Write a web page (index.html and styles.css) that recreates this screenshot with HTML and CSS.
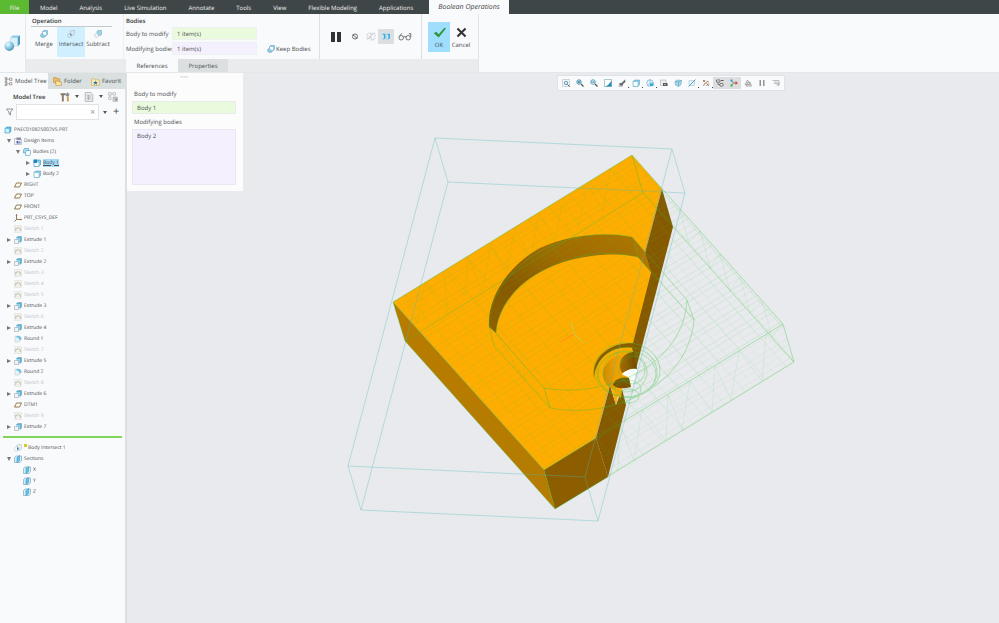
FILE: index.html
```html
<!DOCTYPE html>
<html lang="en">
<head>
    <meta charset="UTF-8">
    <meta name="viewport" content="width=device-width, initial-scale=1.0">
    <title>Boolean Operations</title>
    <link rel="stylesheet" href="styles.css">
</head>
<body>
    <!-- shared icons -->
    <svg class="sprite" aria-hidden="true">
        <defs>
            <radialGradient id="ball" cx=".35" cy=".3" r=".8">
                <stop offset="0" stop-color="#eefaff"/>
                <stop offset=".5" stop-color="#8cc9e3"/>
                <stop offset="1" stop-color="#3e87a8"/>
            </radialGradient>
        </defs>
        <symbol id="i-boolean" viewBox="0 0 16 16">
            <path d="M6 3l2-2h7v8l-2 2H6z" fill="#8ccbe5"/>
            <path d="M6 3h7v8H6z" fill="#d9f0fa"/>
            <path d="M13 3l2-2v8l-2 2z" fill="#4d9bbd"/>
            <circle cx="5" cy="11" r="4.5" fill="url(#ball)"/>
        </symbol>
        <symbol id="i-merge" viewBox="0 0 16 16">
            <path d="M5 3l2-2h8v8l-2 2h-2c0 3-2 4-5 4-3 0-5-2-5-4 0-3 2-4 4-4z" fill="#8fcbe3" stroke="#5f9cb5"/>
            <path d="M6 4h6v6H9L6 7z" fill="#f5fcff"/>
        </symbol>
        <symbol id="i-intersect" viewBox="0 0 16 16">
            <path d="M6 3l2-2h7v8l-2 2H6z" fill="#d8e3e9" stroke="#9fb5bf"/>
            <circle cx="5" cy="11" r="4" fill="#dce6eb" stroke="#a1b5be"/>
            <path d="M6 7c3 0 4 2 3 4H6z" fill="#3d9bcb"/>
        </symbol>
        <symbol id="i-subtract" viewBox="0 0 16 16">
            <path d="M6 3l2-2h7v8l-2 2H9c0-2-1-4-3-4z" fill="#9ed5ec" stroke="#5f9cb5"/>
            <circle cx="5" cy="11" r="4" fill="#eef2f5" stroke="#b4c1c8"/>
        </symbol>
        <symbol id="i-part" viewBox="0 0 16 16">
            <path d="M2 5l3-3h9v8l-3 4H2z" fill="#63c3ea" stroke="#2d84aa"/>
            <path d="M3 6h7v7H3z" fill="#d4f2fd"/>
        </symbol>
        <symbol id="i-design" viewBox="0 0 16 16">
            <path d="M1 3h5l1 2h8v10H1z" fill="#f4f1fa" stroke="#9b93ad"/>
            <path d="M5 1h9v5H5z" fill="#8f89a5"/>
            <path d="M5 13V8h4v5z" fill="#6f5b9c"/>
            <circle cx="11" cy="11" r="2.5" fill="#69a8d0"/>
        </symbol>
        <symbol id="i-bodies" viewBox="0 0 16 16">
            <path d="M1 4l2-3h8v9H1z" fill="#a7dff5" stroke="#3284a8"/>
            <path d="M5 8l2-3h8v7l-2 3H5z" fill="#f3fcff" stroke="#3284a8"/>
        </symbol>
        <symbol id="i-body" viewBox="0 0 16 16">
            <path d="M2 5l3-3h10v9l-3 4H2z" fill="#8bcbe4" stroke="#4f98b8"/>
            <path d="M3 6h8v8H3z" fill="#fff"/>
        </symbol>
        <symbol id="i-body-on" viewBox="0 0 16 16">
            <path d="M2 5l3-3h10v9l-3 4H2z" fill="#8bcbe4" stroke="#3284a8"/>
            <path d="M3 7h8v7H3z" fill="#fff"/>
            <path d="M1 1h7v7H1z" fill="#1e86ba"/>
        </symbol>
        <symbol id="i-plane" viewBox="0 0 16 16">
            <path d="M5 4h10l-4 8H1z" fill="#fffdf5" stroke="#8c6b3e" stroke-width="1.8"/>
        </symbol>
        <symbol id="i-csys" viewBox="0 0 16 16">
            <path d="M5 1v10h10M5 11l-4 4" fill="none" stroke="#8c6b3e" stroke-width="1.8"/>
            <path d="M3 3l2-3 2 3zM13 9l3 2-3 2z" fill="#8c6b3e"/>
        </symbol>
        <symbol id="i-sketch" viewBox="0 0 16 16">
            <path d="M1 1h14v14H1z" fill="#f1f1ec" stroke="#dddcd4"/>
            <path d="M3 12c0-9 10-9 10 0M2 7h4M10 6l4 3" fill="none" stroke="#bab7a4" stroke-width="1.5"/>
        </symbol>
        <symbol id="i-extrude" viewBox="0 0 16 16">
            <path d="M5 3l3-2h7v9l-3 3z" fill="#52b5df" stroke="#72909c"/>
            <path d="M5 4h7v7H5z" fill="#94d7f1"/>
            <path d="M1 7h8v8H1z" fill="#eef3f6" stroke="#8b9ba3"/>
        </symbol>
        <symbol id="i-round" viewBox="0 0 16 16">
            <path d="M2 2h6c4 0 6 2 6 6l-4 6H2z" fill="#e7f0f4" stroke="#b9c8cf"/>
            <path d="M5 2h4c4 0 6 3 6 7l-4 2c0-4-2-6-6-6z" fill="#6cc2e7"/>
        </symbol>
        <symbol id="i-isect" viewBox="0 0 16 16">
            <path d="M5 3l3-2h7v9l-3 3H5z" fill="#e3e9ec" stroke="#b7c2c8"/>
            <circle cx="5" cy="10" r="4.5" fill="#fafcfd" stroke="#b7c2c8"/>
            <path d="M6 6l4 3-4 4z" fill="#3986ab"/>
        </symbol>
        <symbol id="i-section" viewBox="0 0 16 16">
            <path d="M1 5l3-3h11v9l-3 4H1z" fill="#d6edf7" stroke="#5b8fa6"/>
            <path d="M6 5l5-4v10l-5 4z" fill="#5fc6f1" stroke="#2f87ae"/>
        </symbol>
    </svg>

    <nav class="menu-bar">
        <button class="menu file">File</button>
        <button class="menu">Model</button>
        <button class="menu">Analysis</button>
        <button class="menu">Live Simulation</button>
        <button class="menu">Annotate</button>
        <button class="menu">Tools</button>
        <button class="menu">View</button>
        <button class="menu">Flexible Modeling</button>
        <button class="menu">Applications</button>
        <button class="menu current">Boolean Operations</button>
    </nav>

    <header class="ribbon">
        <div class="ribbon-side"><svg class="big-icon"><use href="#i-boolean"/></svg></div>
        <div class="ribbon-main">
            <div class="groups">
                <section class="group operation">
                    <h2>Operation</h2>
                    <div class="op-buttons">
                        <button class="op"><svg><use href="#i-merge"/></svg>Merge</button>
                        <button class="op active"><svg><use href="#i-intersect"/></svg>Intersect</button>
                        <button class="op"><svg><use href="#i-subtract"/></svg>Subtract</button>
                    </div>
                </section>
                <section class="group bodies">
                    <h2>Bodies</h2>
                    <div class="body-fields">
                        <label for="modify">Body to modify</label>
                        <input class="pick green" id="modify" value="1 item(s)" readonly>
                        <span></span>
                        <label for="modifying">Modifying bodies</label>
                        <input class="pick purple" id="modifying" value="1 item(s)" readonly>
                        <button class="keep"><svg><use href="#i-merge"/></svg>Keep Bodies</button>
                    </div>
                </section>
                <section class="group preview">
                    <button class="tool pause" aria-label="Pause"><svg viewBox="0 0 12 12"><path d="M1 1h4v10H1zM7 1h4v10H7z" fill="#333"/></svg></button>
                    <button class="tool" aria-label="No preview"><svg viewBox="0 0 16 16"><circle cx="8" cy="8" r="4.5" fill="none" stroke="#555" stroke-width="1.5"/><path d="M4 5l8 6" stroke="#555" stroke-width="1.5"/></svg></button>
                    <button class="tool" aria-label="Unattached preview"><svg viewBox="0 0 16 16"><path d="M1 4l2-2h5v9H1zM8 5l2-3h5v9l-2 3H6M1 14l13-12M2 5l11 9" fill="none" stroke="#a5a9ab" stroke-dasharray="2 1"/></svg></button>
                    <button class="tool on" aria-label="Attached preview"><svg viewBox="0 0 16 16"><path d="M1 5l2-2h4v8l-2 2H1zM9 5l2-2h4v8l-2 2H9z" fill="#39aede"/><path d="M1 5h3v7H1zM9 5h3v7H9z" fill="#d7f0fa"/></svg></button>
                    <button class="tool glasses" aria-label="Verify"><svg viewBox="0 0 22 14"><g fill="none" stroke="#6b6f71" stroke-width="1.5"><circle cx="5" cy="9" r="3.5"/><circle cx="16" cy="9" r="3.5"/><path d="M8 8q3-2 5 0M2 7l4-5M20 8V2l-3 1"/></g></svg></button>
                </section>
                <section class="group finish">
                    <button class="done ok"><svg viewBox="0 0 16 16"><path d="M1 9l3-2 3 3 7-8 2 1-9 11z" fill="#2f973d"/></svg>OK</button>
                    <button class="done"><svg viewBox="0 0 16 16"><path d="M3 3l10 10M13 3L3 13" stroke="#333" stroke-width="2.5"/></svg>Cancel</button>
                </section>
            </div>
            <div class="dash-tabs">
                <button class="dash-tab open">References</button>
                <button class="dash-tab">Properties</button>
            </div>
        </div>
    </header>

    <main class="workspace">
        <aside class="sidebar">
            <div class="side-tabs">
                <button class="side-tab open"><svg viewBox="0 0 16 16"><path d="M4 1v14M4 4h6M4 12h6" fill="none" stroke="#777"/><path d="M2 1h3v3H2zM2 7h3v3H2zM2 13h3v3H2zM10 2h4v4h-4zM10 10h4v4h-4z" fill="#fff" stroke="#666"/></svg>Model Tree</button>
                <button class="side-tab"><svg viewBox="0 0 16 16"><path d="M1 1h5l1 2h5v7H1z" fill="#eebd62" stroke="#b98a3b"/><path d="M5 7h5l1 2h4v6H5z" fill="#ffe5a6" stroke="#b98a3b"/></svg>Folder</button>
                <button class="side-tab"><svg viewBox="0 0 16 16"><path d="M1 3h5l1 2h8v10H1z" fill="#ffe9b5" stroke="#c3a15d"/><path d="M8 6l1 3h3l-2 2 1 3-3-2-3 2 1-3-2-2h3z" fill="#287da4"/></svg>Favorit</button>
            </div>
            <div class="side-head">
                <h1>Model Tree</h1>
                <button aria-label="Settings"><svg viewBox="0 0 16 16"><path d="M1 2h8v3H6v10H3V5H1z" fill="#88786a"/><path d="M12 1v5M10 2v4h4V2" fill="none" stroke="#777" stroke-width="1.5"/><path d="M11 7h3v8h-3z" fill="#d39a4d"/></svg></button>
                <button class="drop" aria-label="Settings menu"></button>
                <button aria-label="Show"><svg viewBox="0 0 16 16"><path d="M2 1h9l3 3v11H2z" fill="#f5f6f7" stroke="#8d9295"/><path d="M4 5h8M4 8h8M4 11h8M7 5v8" stroke="#8d9295"/></svg></button>
                <button class="drop" aria-label="Show menu"></button>
                <button aria-label="Find"><svg viewBox="0 0 16 16"><path d="M1 1h4v4H1zM8 1h4v4H8zM1 8h4v4H1zM3 5v3M5 3h3" fill="none" stroke="#aaa"/><path d="M8 8h7v7H8z" fill="#d2d4d5" stroke="#aaa"/><path d="M10 9l4 4M14 10v3h-3" fill="none" stroke="#777"/></svg></button>
            </div>
            <div class="filter">
                <svg viewBox="0 0 16 16"><path d="M1 2h13l-5 6v6l-3-2V8z" fill="none" stroke="#777" stroke-width="1.5"/></svg>
                <div class="search-box">
                    <input type="text" aria-label="Filter tree">
                    <button aria-label="Clear">×</button>
                </div>
                <button class="drop" aria-label="Filter menu"></button>
                <button class="plus" aria-label="Add filter">+</button>
            </div>

            <ul class="tree">
                <li class="root"><svg><use href="#i-part"/></svg>PAEC010825002V5.PRT</li>
                <li><button class="caret down" aria-label="Collapse"></button><svg><use href="#i-design"/></svg>Design Items</li>
                <li class="sub"><button class="caret down" aria-label="Collapse"></button><svg><use href="#i-bodies"/></svg>Bodies (2)</li>
                <li class="subsub"><button class="caret" aria-label="Expand"></button><svg><use href="#i-body-on"/></svg><span class="picked">Body 1</span></li>
                <li class="subsub"><button class="caret" aria-label="Expand"></button><svg><use href="#i-body"/></svg>Body 2</li>
                <li><i></i><svg><use href="#i-plane"/></svg>RIGHT</li>
                <li><i></i><svg><use href="#i-plane"/></svg>TOP</li>
                <li><i></i><svg><use href="#i-plane"/></svg>FRONT</li>
                <li><i></i><svg><use href="#i-csys"/></svg>PRT_CSYS_DEF</li>
                <li class="hidden"><i></i><svg><use href="#i-sketch"/></svg>Sketch 1</li>
                <li><button class="caret" aria-label="Expand"></button><svg><use href="#i-extrude"/></svg>Extrude 1</li>
                <li class="hidden"><i></i><svg><use href="#i-sketch"/></svg>Sketch 2</li>
                <li><button class="caret" aria-label="Expand"></button><svg><use href="#i-extrude"/></svg>Extrude 2</li>
                <li class="hidden"><i></i><svg><use href="#i-sketch"/></svg>Sketch 3</li>
                <li class="hidden"><i></i><svg><use href="#i-sketch"/></svg>Sketch 4</li>
                <li class="hidden"><i></i><svg><use href="#i-sketch"/></svg>Sketch 5</li>
                <li><button class="caret" aria-label="Expand"></button><svg><use href="#i-extrude"/></svg>Extrude 3</li>
                <li class="hidden"><i></i><svg><use href="#i-sketch"/></svg>Sketch 6</li>
                <li><button class="caret" aria-label="Expand"></button><svg><use href="#i-extrude"/></svg>Extrude 4</li>
                <li><i></i><svg><use href="#i-round"/></svg>Round 1</li>
                <li class="hidden"><i></i><svg><use href="#i-sketch"/></svg>Sketch 7</li>
                <li><button class="caret" aria-label="Expand"></button><svg><use href="#i-extrude"/></svg>Extrude 5</li>
                <li><i></i><svg><use href="#i-round"/></svg>Round 2</li>
                <li class="hidden"><i></i><svg><use href="#i-sketch"/></svg>Sketch 8</li>
                <li><button class="caret" aria-label="Expand"></button><svg><use href="#i-extrude"/></svg>Extrude 6</li>
                <li><i></i><svg><use href="#i-plane"/></svg>DTM1</li>
                <li class="hidden"><i></i><svg><use href="#i-sketch"/></svg>Sketch 9</li>
                <li><button class="caret" aria-label="Expand"></button><svg><use href="#i-extrude"/></svg>Extrude 7</li>
            </ul>
            <hr class="insert-here">
            <ul class="tree">
                <li><i></i><svg><use href="#i-isect"/></svg><span><b class="new"></b>Body Intersect 1</span></li>
                <li><button class="caret down" aria-label="Collapse"></button><svg><use href="#i-section"/></svg>Sections</li>
                <li class="sub"><i></i><svg><use href="#i-section"/></svg>X</li>
                <li class="sub"><i></i><svg><use href="#i-section"/></svg>Y</li>
                <li class="sub"><i></i><svg><use href="#i-section"/></svg>Z</li>
            </ul>
        </aside>

        <section class="stage">
            <svg class="model" viewBox="127 73 872 550" role="img" aria-label="Intersected body">
                <defs>
                    <pattern id="grid" width="24" height="18" patternUnits="userSpaceOnUse" patternTransform="matrix(.853 -.522 .666 .746 393.5 302)">
                        <path d="M0 0H24M0 7H24M0 12H24M0 0V18M14 0V18" fill="none" stroke="#3fbf3f" stroke-width=".5"/>
                    </pattern>
                    <linearGradient id="wall" x1="0" y1="1" x2="1" y2="0">
                        <stop offset="0" stop-color="#8f5f00"/>
                        <stop offset=".3" stop-color="#875900"/>
                        <stop offset=".6" stop-color="#9f6a00"/>
                        <stop offset="1" stop-color="#b17600"/>
                    </linearGradient>
                    <linearGradient id="bore">
                        <stop offset="0" stop-color="#d08a00"/>
                        <stop offset=".4" stop-color="#f09f00"/>
                        <stop offset="1" stop-color="#ffad00"/>
                    </linearGradient>
                    <linearGradient id="bore-in">
                        <stop offset="0" stop-color="#a66d00"/>
                        <stop offset="1" stop-color="#6e4800"/>
                    </linearGradient>
                </defs>

                <!-- solid -->
                <path d="M632 155L662 189L645 253L652 272L634 347L622 389L609 389L596 438L544 470L393 302z" fill="#ffad00"/>
                <path d="M393 302L405 341L555 509L544 470z" fill="#b77b00"/>
                <path d="M544 470L596 438L608 477L555 509z" fill="#8d5e00"/>
                <path d="M596 438L610 386L616 405L622 389L626 405L608 477z" fill="#865900"/>
                <path d="M662 189L673 227L636 369L632 347L651 273L645 253z" fill="#865900"/>

                <!-- pocket wall -->
                <path d="M489 327V318C492 289 513 263 540 248C566 236 600 231 632 237L645 252L651 272L638 257C610 251 573 256 546 269C518 282 498 306 496 333z" fill="url(#wall)"/>
                <path d="M632 237L645 253L651 272L638 257z" fill="#b07600"/>

                <!-- counterbore and hole -->
                <path d="M594 378C591 357 610 342 634 343L633 348C613 345 596 357 594 378z" fill="#8a5c00"/>
                <path d="M611 388C598 381 599 357 628 352L634 352L632 372L624 388z" fill="url(#bore)"/>
                <path d="M622 373C616 362 624 352 634 352L637 369L630 370z" fill="url(#bore-in)"/>
                <path d="M622 374C626 370 631 368 637 369L632 388L629 378C627 376 624 376 622 374z" fill="#fff"/>
                <path d="M613 385C614 379 623 376 629 378L631 387C623 389 617 389 613 385z" fill="#7c5200"/>
                <path d="M611 388L616 405L618 396L621 398L622 389z" fill="#ffad00"/>

                <!-- mesh -->
                <path d="M393 302L632 155L783 324L544 470z" fill="url(#grid)" opacity=".25"/>
                <path d="M405 341L544 470L555 509zM596 438L608 477L794 362L783 324z" fill="url(#grid)" opacity=".15"/>
                <path class="mesh" d="M405 295L417 324L425 283L447 315L444 271L465 296L468 256L482 291L491 243L506 273L515 228L531 258L539 213L555 242L563 198L579 226L587 183L603 212L610 169L643 193
                    M662 189L665 218L679 208L689 243L700 231L710 268L720 254L730 291L740 277L750 313L762 301L772 337L783 324
                    M596 438L618 471L620 424L634 461L642 410L666 441L668 395L682 430L690 381L712 412L715 366L731 400L739 351L762 381L766 334L794 362
                    M489 325L544 388L550 408M496 333L525 381L523 364"/>

                <!-- stock outline -->
                <g class="wire">
                    <path d="M632 155L393 302L405 341L643 193L632 155L783 324L794 362L643 193M783 324L544 470L393 302M544 470L555 509L794 362M405 341L555 509"/>
                    <path d="M489 325L494 346L550 408L544 388L489 325C490 270 560 223 632 237L687 300C684 365 607 399 544 388"/>
                    <path d="M496 333C497 290 564 240 638 257L694 320C688 386 613 420 550 408M632 237L638 257M687 300L694 320"/>
                    <ellipse cx="627" cy="370" rx="33" ry="27"/>
                    <ellipse cx="627" cy="372" rx="30" ry="25"/>
                    <ellipse cx="627" cy="374" rx="29" ry="23"/>
                    <ellipse cx="625" cy="372" rx="22" ry="20"/>
                    <ellipse cx="632" cy="370" rx="13" ry="14"/>
                    <ellipse cx="628" cy="389" rx="13" ry="9"/>
                    <ellipse cx="629" cy="396" rx="10" ry="7"/>
                </g>
                <path class="box" d="M435 138L672 149L685 193L448 182zM348 466L585 477L598 521L361 510zM435 138L348 466M672 149L585 477M685 193L598 521M448 182L361 510"/>

                <!-- origin -->
                <path d="M574 334L560 342" stroke="#ff7a33" stroke-width=".7"/>
                <path d="M571 322L574 334L583 343" fill="none" stroke="#a8dc63" stroke-width=".7"/>
            </svg>

            <div class="view-tools">
                <button aria-label="Refit"><svg viewBox="0 0 16 16"><path d="M1 1h14v14H1z" fill="#f5f8fa" stroke="#a5b0b5"/><circle cx="8" cy="8" r="3.5" fill="#d2eef9" stroke="#447f99" stroke-width="1.5"/><path d="M11 11l4 4" stroke="#555" stroke-width="2"/></svg></button>
                <button aria-label="Zoom in"><svg viewBox="0 0 16 16"><circle cx="6" cy="6" r="4.5" fill="#d2eef9" stroke="#3b86a6" stroke-width="1.5"/><path d="M10 10l5 5" stroke="#555" stroke-width="2.5"/><path d="M3 6h6M6 3v6" stroke="#19678d" stroke-width="1.5"/></svg></button>
                <button aria-label="Zoom out"><svg viewBox="0 0 16 16"><circle cx="6" cy="6" r="4.5" fill="#e8f6fb" stroke="#3b86a6" stroke-width="1.5"/><path d="M10 10l5 5" stroke="#555" stroke-width="2.5"/><path d="M3 6h6" stroke="#19678d" stroke-width="1.5"/></svg></button>
                <button aria-label="Repaint"><svg viewBox="0 0 16 16"><path d="M1 1h14v14H1z" fill="#fff" stroke="#5b8ea5"/><path d="M15 3v12H2C9 13 12 8 15 3z" fill="#248bb8"/></svg></button>
                <button class="more" aria-label="Rendering"><svg viewBox="0 0 16 16"><path d="M14 1l1 5-5 4-3-2zM3 8h7v5H3z" fill="#666b6e"/><path d="M1 14h9" stroke="#999" stroke-width="2"/></svg></button>
                <button class="more" aria-label="Display style"><svg><use href="#i-body"/></svg></button>
                <button class="more" aria-label="Saved orientations"><svg viewBox="0 0 16 16"><circle cx="8" cy="8" r="6.5" fill="#e8f7fd" stroke="#3b94bb"/><path d="M8 1v7h7M8 8l-4 5" fill="none" stroke="#3b94bb"/><path d="M8 9h7v5H8z" fill="#37a9db"/></svg></button>
                <button aria-label="View manager"><svg viewBox="0 0 16 16"><path d="M1 2h11v11H1z" fill="#eceeef" stroke="#9aa0a3"/><path d="M6 8h9v6H6z" fill="#555"/><circle cx="10" cy="11" r="1.5" fill="#ddd"/></svg></button>
                <button aria-label="Perspective"><svg viewBox="0 0 16 16"><path d="M2 5l5-3 8 1-1 8-5 4-6-3z" fill="#a9daec" stroke="#4f94b2"/><path d="M2 5l7 1 6-3M9 6v9" fill="none" stroke="#4f94b2"/></svg></button>
                <button class="more" aria-label="Section"><svg viewBox="0 0 16 16"><path d="M2 3h11v10H2z" fill="#e3f3fa" stroke="#a0bdc9"/><path d="M1 15L15 1" stroke="#2989b4" stroke-width="1.5"/></svg></button>
                <button class="more" aria-label="Datum display"><svg viewBox="0 0 16 16"><path d="M2 2l4 4M6 2L2 6M3 14l3-6h5M9 4l5 2M9 9l5 5M14 9l-5 5" fill="none" stroke="#96724c" stroke-width="1.6"/></svg></button>
                <button class="on" aria-label="Annotations"><svg viewBox="0 0 16 16"><path d="M1 2h7v4H1zM8 9h6v5H8zM4 6v5h4" fill="#fff" stroke="#555" stroke-width="1.5"/><path d="M10 3h5" stroke="#555" stroke-width="2"/></svg></button>
                <button class="on" aria-label="Spin center"><svg viewBox="0 0 16 16"><path d="M7 8L3 3" stroke="#3a9bc0" stroke-width="2"/><path d="M7 8l-4 5" stroke="#49a35a" stroke-width="2"/><path d="M7 8h6" stroke="#d14e41" stroke-width="2"/><path d="M1 1h4v4H1z" fill="#3a9bc0"/><path d="M1 11h4v4H1z" fill="#49a35a"/><path d="M11 4l5 4-5 4z" fill="#d14e41"/></svg></button>
                <button aria-label="Simulate"><svg viewBox="0 0 16 16"><path d="M7 2l5 9H2zM8 6h4l3 8H4z" fill="#e3e5e6" stroke="#999" stroke-width="1.5"/></svg></button>
                <button aria-label="Pause simulation"><svg viewBox="0 0 16 16"><path d="M3 2h3v12H3zM10 2h3v12h-3z" fill="#8f9496"/></svg></button>
                <button aria-label="Results"><svg viewBox="0 0 16 16"><path d="M1 3h13v9h-5M4 6h7M4 9h7" fill="none" stroke="#aaa" stroke-width="1.5"/><path d="M11 7h4v6h-4z" fill="#b5b8ba"/></svg></button>
            </div>

            <div class="ref-panel">
                <div class="grip">·····</div>
                <label for="ref-modify">Body to modify</label>
                <input class="green" id="ref-modify" value="Body 1" readonly>
                <label for="ref-modifying">Modifying bodies</label>
                <textarea class="purple" id="ref-modifying" readonly>Body 2</textarea>
            </div>
        </section>
    </main>
</body>
</html>
```

FILE: styles.css
```css
* {
    box-sizing: border-box;
}

body {
    font-family: "Open Sans", "Noto Sans", sans-serif;
    font-size: 6px;
    line-height: 8px;
    text-rendering: geometricPrecision;
    margin: 0;
    min-height: 100vh;
    display: flex;
    flex-direction: column;
    color: #4b4f51;
    background: #e8eaed;
}

button, input, textarea {
    font: inherit;
    text-rendering: inherit;
    color: inherit;
    border: 0;
    margin: 0;
    padding: 0;
    background: none;
    outline: none;
}

svg {
    display: block;
    flex: none;
    width: 8px;
    height: 8px;
}

h1, h2 {
    font-size: 6px;
    font-weight: 600;
    color: #333;
    margin: 0;
}

.sprite {
    position: absolute;
    width: 0;
    height: 0;
}

/* menu bar */
.menu-bar {
    display: flex;
    height: 14px;
    background: #3f4647;
    color: #eef0f0;
}

.menu {
    padding: 1px 11px 0;
    white-space: nowrap;
}

.menu.file {
    width: 29px;
    padding: 1px 0 0;
    background: #5bb932;
}

.menu.current {
    margin-left: 5px;
    padding: 1px 9px 0;
    background: #f8fafc;
    color: #444;
    font-size: 7px;
    font-style: italic;
}

/* ribbon */
.ribbon {
    display: flex;
    height: 59px;
    background: #f8fafc;
    border-bottom: 1px solid #e4e7e9;
}

.ribbon-side {
    width: 26px;
    padding: 20px 4px;
    border-right: 1px solid #e6e9eb;
}

.big-icon {
    width: 17px;
    height: 18px;
}

.ribbon-main {
    display: flex;
    flex-direction: column;
    border-right: 1px solid #e2e5e7;
}

.groups {
    display: flex;
    height: 45px;
}

.group {
    padding-top: 3px;
}

.operation {
    width: 98px;
    padding-left: 5px;
    border-right: 1px solid #edf0f2;
}

.operation h2 {
    width: 81px;
    padding-left: 1px;
    height: 10px;
    border-bottom: 1px solid #c4c8ca;
}

.op-buttons {
    display: flex;
}

.op {
    width: 26px;
    height: 30px;
    padding: 3px 0 0;
    display: flex;
    flex-direction: column;
    align-items: center;
    gap: 2px;
}

.op svg {
    width: 10px;
}

.op.active {
    width: 28px;
    background: #d1f0ff;
}

.bodies {
    width: 196px;
    padding-left: 2px;
    border-right: 1px solid #dcdfe1;
}

.body-fields {
    display: grid;
    grid-template-columns: 46px 85px 1fr;
    grid-auto-rows: 13px;
    row-gap: 2px;
    padding-top: 2px;
    align-items: center;
    white-space: nowrap;
}

.pick {
    width: 85px;
    height: 13px;
    padding-left: 4px;
    border: 1px solid #eef0f2;
}

.green {
    background: #e9fbdc;
}

.purple {
    background: #f4f0fe;
}

.keep {
    display: flex;
    align-items: center;
    gap: 1px;
    padding-left: 10px;
}

.preview {
    width: 102px;
    display: flex;
    align-items: center;
    padding: 0 6px;
    border-right: 1px solid #dcdfe1;
}

.tool {
    width: 16px;
    height: 15px;
    display: flex;
    align-items: center;
    justify-content: center;
}

.tool.on {
    background: #dcdfe1;
}

.tool svg {
    width: 10px;
    height: 9px;
}

.tool.pause {
    width: 21px;
}

.tool.pause svg {
    width: 14px;
    height: 12px;
}

.tool.glasses {
    width: 21px;
}

.tool.glasses svg {
    width: 14px;
}

.finish {
    display: flex;
    padding: 8px 6px 0;
}

.done {
    width: 22px;
    height: 30px;
    display: flex;
    flex-direction: column;
    align-items: center;
    padding-top: 4px;
    gap: 2px;
}

.done svg {
    width: 13px;
    height: 13px;
}

.done.ok {
    width: 22px;
    background: #a0deff;
}

.dash-tabs {
    display: flex;
    flex: 1;
    padding-left: 100px;
    background: #e9ebed;
}

.dash-tab {
    width: 50px;
    background: #dcdfe0;
}

.dash-tab.open {
    width: 52px;
    background: #f8fafc;
}

/* model tree */
.workspace {
    display: flex;
    flex: 1;
}

.sidebar {
    width: 127px;
    flex: none;
    background: #f8fafc;
    border-right: 2px solid #dce0e2;
}

.side-tabs {
    display: flex;
    height: 16px;
    background: #dae0df;
}

.side-tab {
    display: flex;
    flex: none;
    align-items: center;
    gap: 2px;
    padding-left: 5px;
    width: 38px;
    white-space: nowrap;
}

.side-tab.open {
    width: 48px;
    padding-left: 4px;
    background: #f8fafc;
}

.side-tab svg {
    width: 9px;
    height: 9px;
}

.side-head {
    display: flex;
    align-items: center;
    height: 15px;
    padding-left: 13px;
    gap: 5px;
}

.side-head h1 {
    width: 42px;
}

.side-head svg {
    width: 10px;
    height: 10px;
}

.drop::after {
    content: "";
    display: block;
    border: 2px solid transparent;
    border-top: 3px solid #555;
    border-bottom: 0;
}

.filter {
    display: flex;
    align-items: center;
    height: 16px;
    padding-left: 6px;
    gap: 2px;
}

.search-box {
    display: flex;
    width: 83px;
    height: 16px;
    background: #fff;
    border: 1px solid #e0e4e6;
}

.search-box input {
    flex: 1;
    min-width: 0;
}

.search-box button {
    width: 11px;
    font-size: 9px;
    color: #888;
}

.filter .drop {
    margin: 0 4px 0 2px;
}

.plus {
    font-size: 11px;
}

.tree {
    list-style: none;
    margin: 0;
    padding: 0;
    font-size: 5px;
}

.filter + .tree {
    margin-top: 4px;
}

.tree li {
    display: flex;
    align-items: center;
    height: 11px;
    padding-left: 6px;
    gap: 2px;
    white-space: nowrap;
}

.tree .root {
    padding-left: 4px;
}

.tree .sub {
    padding-left: 15px;
}

.tree .subsub {
    padding-left: 25px;
}

.tree .hidden {
    color: #bfc3c5;
}

.tree i, .caret {
    width: 6px;
    height: 6px;
    flex: none;
}

.caret::after {
    content: "";
    display: block;
    width: 0;
    margin: 1px;
    border: 2px solid transparent;
    border-left: 4px solid #777;
    border-right: 0;
}

.caret.down::after {
    border: 2px solid transparent;
    border-top: 4px solid #777;
    border-bottom: 0;
}

.picked {
    background: #a3dcf8;
    text-decoration: underline;
}

.new {
    display: inline-block;
    width: 3px;
    height: 3px;
    margin-right: 1px;
    vertical-align: top;
    background: #d5c92c;
}

.insert-here {
    height: 2px;
    margin: 4px 3px;
    border: 0;
    background: #83d45d;
}

/* graphics area */
.stage {
    flex: 1;
    min-width: 0;
    position: relative;
}

.model {
    width: 100%;
    height: auto;
}

.wire, .mesh, .box {
    fill: none;
    stroke: #38c23c;
    stroke-width: 1;
    opacity: .35;
}

.mesh {
    stroke-width: .5;
    opacity: .2;
}

.box {
    stroke: #4fb9b9;
}

.view-tools {
    position: absolute;
    left: 430px;
    top: 2px;
    display: flex;
    padding: 1px;
    background: #f8fafc;
    border: 1px solid #dfe2e4;
}

.view-tools button {
    width: 14px;
    height: 12px;
    display: flex;
    align-items: center;
    justify-content: center;
    position: relative;
}

.view-tools .on {
    background: #dcdedf;
}

.view-tools .more::after {
    content: "";
    position: absolute;
    right: 0;
    bottom: 1px;
    width: 1px;
    height: 1px;
    background: #444;
}

.ref-panel {
    position: absolute;
    left: 0;
    top: 0;
    width: 116px;
    padding: 0 7px 6px 5px;
    display: flex;
    flex-direction: column;
    background: #fcfcfd;
}

.grip {
    height: 17px;
    text-align: center;
}

.ref-panel label {
    height: 11px;
    padding-left: 2px;
}

.ref-panel input {
    height: 13px;
    margin-bottom: 4px;
    padding-left: 4px;
    border: 1px solid #e8ecea;
}

.ref-panel textarea {
    height: 56px;
    padding: 2px 4px;
    border: 1px solid #e9e8f2;
    resize: none;
}
```
